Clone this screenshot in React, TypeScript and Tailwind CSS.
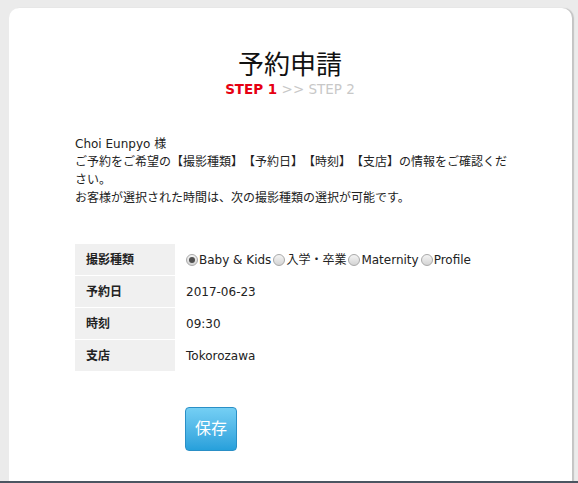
const FONT = '"DejaVu Sans", "Noto Sans CJK JP", sans-serif';

function Radio({ checked }: { checked?: boolean }) {
  return (
    <span className="inline-flex h-[12px] w-[12px] shrink-0 items-center justify-center rounded-full border border-[#a9a9a9] bg-gradient-to-b from-[#f4f4f4] to-[#d4d4d4]">
      {checked && <span className="h-[6px] w-[6px] rounded-full bg-[#505050]" />}
    </span>
  );
}

export default function App() {
  const rows = [
    { label: "予約日", value: "2017-06-23" },
    { label: "時刻", value: "09:30" },
    { label: "支店", value: "Tokorozawa" },
  ];
  const types = [
    { name: "Baby & Kids", checked: true },
    { name: "入学・卒業" },
    { name: "Maternity" },
    { name: "Profile" },
  ];

  return (
    <div
      className="flex h-[483px] w-full flex-col overflow-hidden bg-[#ebebeb] [text-spacing-trim:space-all]"
      style={{ fontFamily: FONT }}
    >
      <div className="flex flex-1 px-[9px] pt-[8px] pr-[6px]">
        {/* card */}
        <div className="flex-1 rounded-t-[10px] bg-white pl-[66px] pt-[42px] shadow-[2px_0_1px_#c4c4c4]">
          <div className="w-[430px] text-center">
            <h1 className="text-[26px] leading-[31px] text-[#111]">予約申請</h1>
            <p className="text-[13.5px] leading-[16px]">
              <span className="font-bold text-[#e60012]">STEP 1</span>
              <span className="text-[#c8c8c8]"> &gt;&gt; STEP 2</span>
            </p>
          </div>

          <div className="mt-[38px] w-[440px] text-[12px] leading-[18px] text-[#222]">
            Choi Eunpyo 様
            <br />
            ご予約をご希望の【撮影種類】【予約日】【時刻】【支店】の情報をご確認ください。
            <br />
            お客様が選択された時間は、次の撮影種類の選択が可能です。
          </div>

          <div className="mt-[37px] flex w-[440px] flex-col text-[12px] text-[#222]">
            <div className="flex h-[32px] border-b border-white">
              <div className="flex w-[100px] items-center bg-[#f0f0f0] pl-[11px] font-bold">撮影種類</div>
              <div className="flex items-center pl-[11px]">
                {types.map((t) => (
                  <span key={t.name} className="mr-[2px] flex items-center">
                    <Radio checked={t.checked} />
                    <span className="ml-[1px]">{t.name}</span>
                  </span>
                ))}
              </div>
            </div>
            {rows.map((r) => (
              <div key={r.label} className="flex h-[32px] border-b border-white">
                <div className="flex w-[100px] items-center bg-[#f0f0f0] pl-[11px] font-bold">{r.label}</div>
                <div className="flex items-center pl-[11px]">{r.value}</div>
              </div>
            ))}
          </div>

          <div className="mt-[35px] pl-[110px]">
            <button className="h-[44px] w-[52px] rounded-[4px] border border-[#2a8fc6] bg-gradient-to-b from-[#74cff4] to-[#26a0db] text-[16px] text-white">
              保存
            </button>
          </div>
        </div>
      </div>
      <div className="h-[2px] bg-[#4b5561]" />
    </div>
  );
}
